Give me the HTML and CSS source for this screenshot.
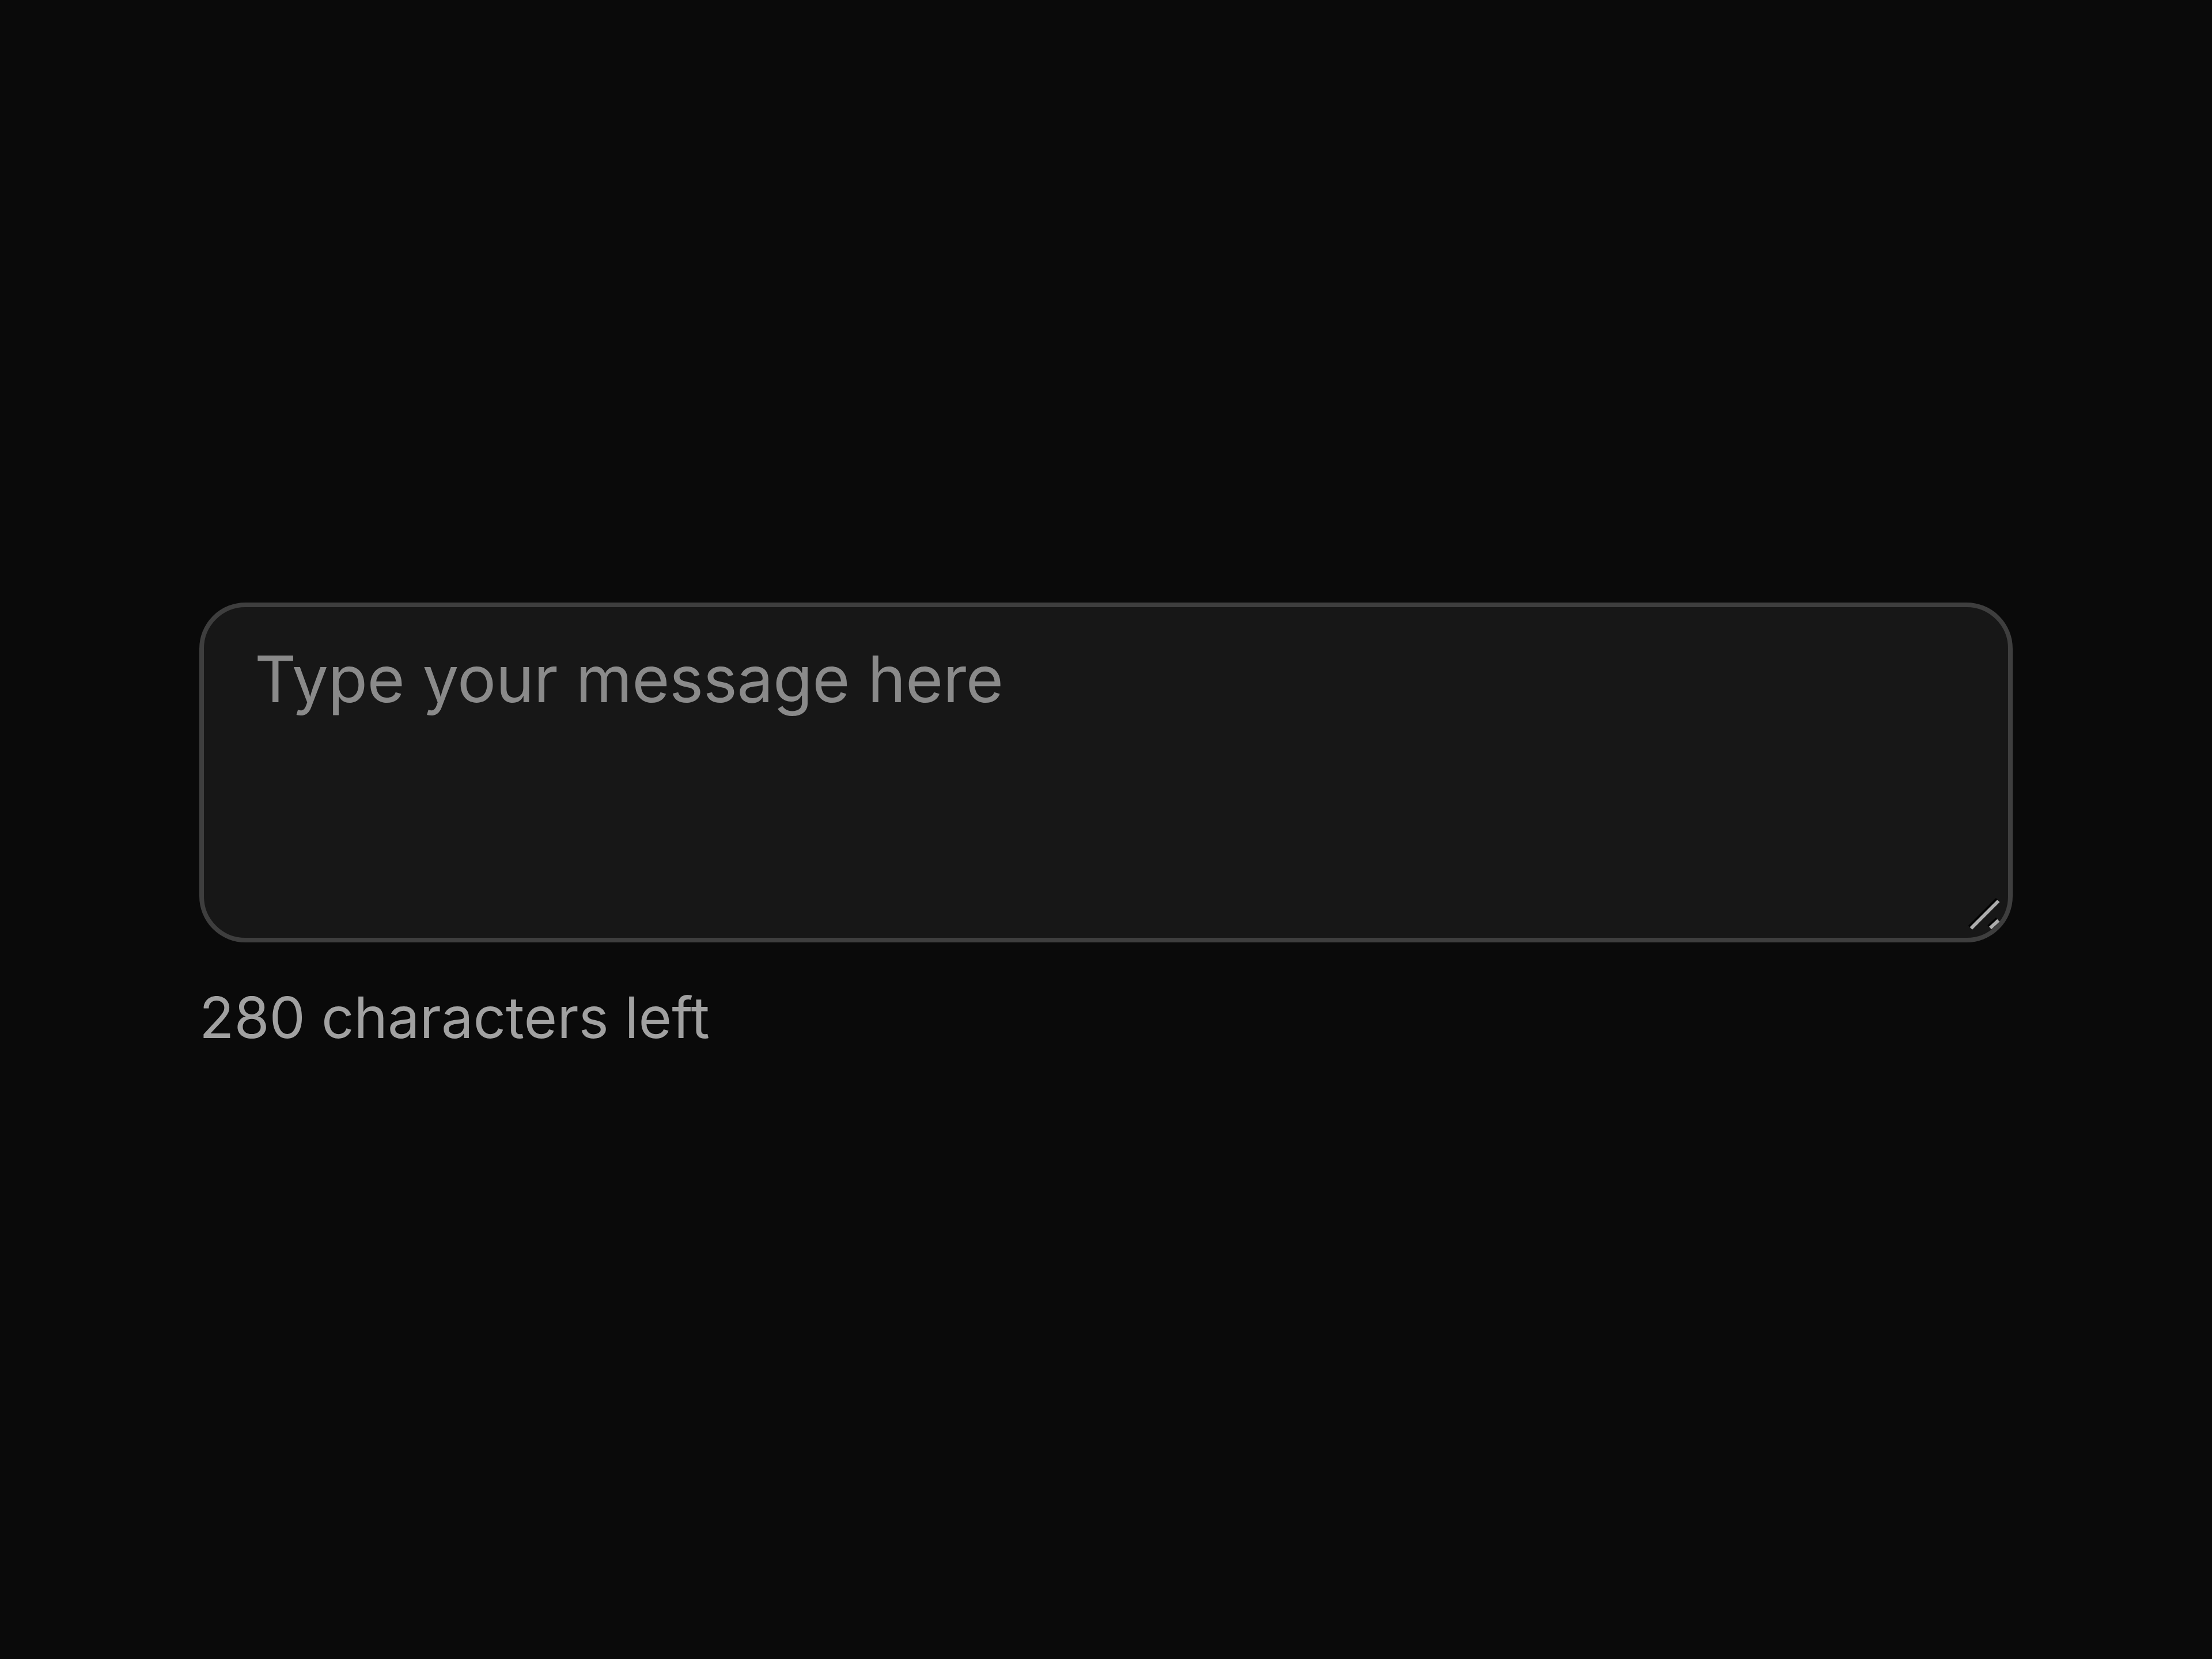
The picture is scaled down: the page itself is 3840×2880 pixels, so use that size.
FILE: index.html
```html
<!DOCTYPE html>
<html lang="en">
<head>
<meta charset="utf-8">
<title>Message</title>
<link rel="stylesheet" href="styles.css">
</head>
<body>
<main class="field">
  <div class="box">
    <textarea class="message" placeholder="Type your message here" maxlength="280"></textarea>
    <svg class="grip" viewBox="0 0 100 100" width="100" height="100" aria-hidden="true">
      <g stroke="#000" stroke-width="6" stroke-linecap="butt" opacity="0.9">
        <line x1="25" y1="73" x2="73" y2="25"/>
        <line x1="58.5" y1="72.5" x2="73" y2="59"/>
      </g>
      <g stroke="#acacac" stroke-width="6" stroke-linecap="butt">
        <line x1="27.7" y1="75.7" x2="75.3" y2="28"/>
        <line x1="61" y1="75" x2="75.3" y2="61.7"/>
      </g>
    </svg>
  </div>
  <p class="counter">280 characters left</p>
</main>
</body>
</html>
```
FILE: styles.css
```css
html, body {
  margin: 0;
  padding: 0;
  background: #0a0a0a;
}
body {
  min-height: 100vh;
  display: flex;
  align-items: center;
  justify-content: center;
  font-family: Inter, "Liberation Sans", sans-serif;
}
.field {
  width: 3148px;
  display: flex;
  flex-direction: column;
}
.box {
  position: relative;
  height: 590px;
}
.message {
  display: block;
  box-sizing: border-box;
  width: 100%;
  height: 590px;
  margin: 0;
  background: #171717;
  border: 8px solid #3e3e3e;
  border-radius: 80px;
  padding: 40px 88px;
  font-family: Inter, "Liberation Sans", sans-serif;
  font-size: 112px;
  line-height: 1.5;
  letter-spacing: -0.4px;
  color: #e5e5e5;
  resize: none;
  outline: none;
}
.message::placeholder {
  color: #8a8a8a;
  opacity: 1;
}
.grip {
  position: absolute;
  right: 0;
  bottom: 0;
  pointer-events: none;
}
.counter {
  margin: 62px 0 0;
  font-size: 99px;
  line-height: 136px;
  color: #a1a1a1;
}
```
